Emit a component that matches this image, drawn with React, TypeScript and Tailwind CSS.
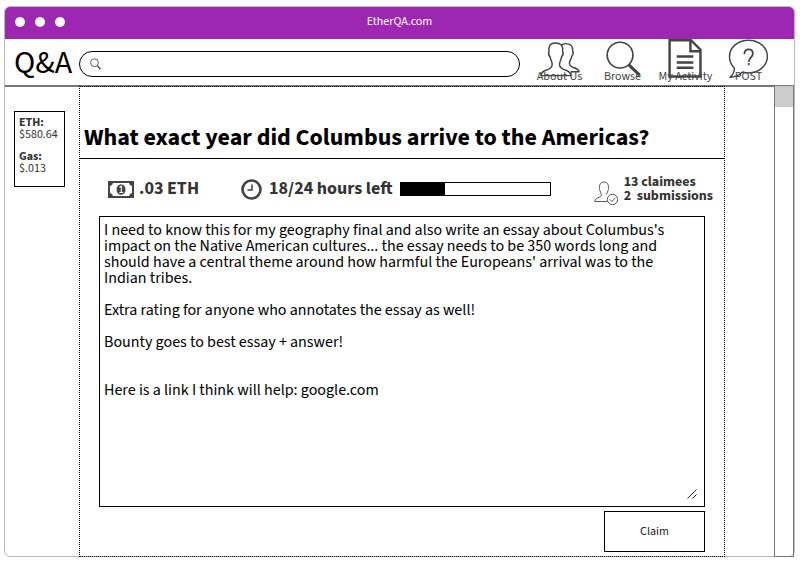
import type { ReactNode } from "react";

const question = `I need to know this for my geography final and also write an essay about Columbus's impact on the Native American cultures... the essay needs to be 350 words long and should have a central theme around how harmful the Europeans' arrival was to the Indian tribes.

Extra rating for anyone who annotates the essay as well!

Bounty goes to best essay + answer!


Here is a link I think will help: google.com`;

const hours = { left: 18, total: 24, shown: 30 };

function PeopleIcon() {
  return (
    <svg width="42" height="42" viewBox="0 0 42 42" fill="none" stroke="#444" strokeWidth="1.5" strokeLinejoin="round">
      <path d="M22 6.500c2-1.500 4.500-2 6-1.500 4.500 0 6.500 3 6 7.500.8 1.500.2 4-1 5.200-.5 3-2 4.500-2.300 6.500-.2 2 .8 3.500 3.300 4.700 4 1.200 6.500 2.500 6.500 4.600H32" />
      <path d="M1.500 37.500c.3-3.200 1.500-4.300 5-5.500 4-1.300 6.500-2.500 6.500-6 0-2.500-1.500-4-2-7.500-1.500-1.500-2-4-1.300-5.500C9 7 11 4 16.500 4s8 3 7.200 9c.8 1.500.3 4-1.200 5.500-.5 3.500-2 5-2 7.500 0 3.500 2.500 4.700 6.500 6 3.500 1.200 5 2.300 5.300 5.500Z" />
    </svg>
  );
}

function BrowseIcon() {
  return (
    <svg width="42" height="42" viewBox="0 0 42 42" fill="none" stroke="#444">
      <circle cx="18" cy="16.500" r="13.200" strokeWidth="1.700" />
      <path d="M27 26.500 38 37" strokeWidth="3.200" />
    </svg>
  );
}

function DocumentIcon() {
  return (
    <svg width="42" height="42" viewBox="0 0 42 42" fill="none" stroke="#444" strokeWidth="2.500">
      <path d="M4.200 1.200H26L35.800 11v27.500H4.200Z" />
      <path d="M25.500 1v11.500H36M11.500 18h17M11.500 24h17M11.500 29.500h17" />
    </svg>
  );
}

function QuestionIcon() {
  return (
    <svg width="42" height="42" viewBox="0 0 42 42" fill="none" stroke="#444" strokeWidth="1.500" strokeLinejoin="round">
      <path d="M20.500 1.200c10.800 0 19.300 7.300 19.300 16.700S31.300 34.700 20.500 34.700c-2 0-4-.3-6-.9C11 37 6.500 39.200 1.500 39.200c3-2.500 4.500-5.500 4.600-9.200C3 27 1 23 1 18 1 8.500 9.700 1.200 20.500 1.200Z" />
      <path d="M16.300 15.500c0-3 1.700-4.800 4.300-4.800s4.300 1.800 4.300 4.300c0 4-4.200 4.200-4.200 8.500M20.700 24.500v2.500" strokeWidth="1.800" />
    </svg>
  );
}

function SearchIcon() {
  return (
    <svg width="11" height="12" viewBox="0 0 11 12" fill="none" stroke="#333" className="shrink-0">
      <circle cx="4.500" cy="4.700" r="3.900" strokeWidth="0.800" />
      <path d="m7.300 7.700 3 3.300" strokeWidth="1.200" />
    </svg>
  );
}

function MoneyIcon() {
  return (
    <svg width="26" height="17" viewBox="0 0 26 17" className="shrink-0">
      <path d="M0 0h26v17H0Z" fill="#444" />
      <path d="M5 2h16q.5 2.500 3 3v7q-2.500.5-3 3H5q-.5-2.500-3-3V5q2.500-.5 3-3Z" fill="#fff" />
      <ellipse cx="13" cy="8.500" rx="4.500" ry="5.300" fill="#444" />
      <path d="m11.500 6.300 1.800-1.100v6M11.300 11.500h3.800" fill="none" stroke="#fff" strokeWidth="1.100" />
    </svg>
  );
}

function ClockIcon() {
  return (
    <svg width="21" height="21" viewBox="0 0 21 21" fill="none" stroke="#444" className="shrink-0">
      <circle cx="10.500" cy="10.500" r="9" strokeWidth="2.600" />
      <path d="M11 5.500v5.500H6.500" strokeWidth="1.600" />
    </svg>
  );
}

function ClaimeeIcon() {
  return (
    <svg width="25" height="25" viewBox="0 0 25 25" fill="none" stroke="#444" strokeWidth="0.900" strokeLinejoin="round" className="mt-2">
      <path d="M13 20.500H.8c0-2.200 1-3 3-3.700 2.200-.7 3.600-1.600 3.600-3 0-1.200-1-2-1.300-4-.8-.8-1-2-.6-3C5.200 3.200 6.800 1 10 1s4.800 2.200 4.400 5.800c.5 1 .2 2.200-.6 3-.2 1.800-1.100 2.600-1.300 3.700" />
      <circle cx="18.500" cy="18.500" r="5.200" />
      <path d="m16 18.500 2 2 3.300-3.700" />
    </svg>
  );
}

function NavLink({ label, children }: { label: string; children: ReactNode }) {
  return (
    <a href="#" className="flex w-[63px] flex-col items-center text-xs leading-4 whitespace-nowrap text-[#444]">
      {children}
      <span className="-mt-[11px]">{label}</span>
    </a>
  );
}

export default function App() {
  return (
    <div className="flex min-h-screen bg-white pt-[6px] pr-[5px] pb-[5px] pl-1 font-['Source_Sans_3','Noto_Sans_CJK_SC',sans-serif] text-black">
      <div className="flex flex-1 flex-col rounded-md border border-[#bbb]">
        <div className="grid h-8 grid-cols-3 items-center rounded-t-[5px] bg-[#9c27b0] px-[10px] pb-[2px]">
          <div className="flex gap-[10px]">
            <span className="size-[10px] rounded-full bg-white" />
            <span className="size-[10px] rounded-full bg-white" />
            <span className="size-[10px] rounded-full bg-white" />
          </div>
          <p className="text-center text-xs leading-4 text-white">EtherQA.com</p>
        </div>

        <header className="flex h-12 items-center border-b-2 border-[#777] pl-[9px]">
          <h1 className="w-[65px] pt-[2px] text-[32px] leading-10">Q&amp;A</h1>
          <label className="mt-1 flex h-[26px] min-w-0 flex-1 items-center gap-2 rounded-full border border-black px-[10px]">
            <SearchIcon />
            <input type="search" aria-label="Search questions" className="min-w-0 flex-1 text-xs outline-none" />
          </label>
          <nav className="flex h-full shrink-0 pr-[14px] pl-2">
            <NavLink label="About Us"><PeopleIcon /></NavLink>
            <NavLink label="Browse"><BrowseIcon /></NavLink>
            <NavLink label="My Activity"><DocumentIcon /></NavLink>
            <NavLink label="POST"><QuestionIcon /></NavLink>
          </nav>
        </header>

        <div className="-my-px flex flex-1">
          <aside className="w-[74px] shrink-0 px-[9px] pt-[25px]">
            <dl className="h-[76px] w-[51px] border border-black px-1 pt-[5px] text-xs leading-3 text-[#333]">
              <dt className="font-bold">ETH:</dt>
              <dd className="mb-[10px]">$580.64</dd>
              <dt className="font-bold">Gas:</dt>
              <dd>$.013</dd>
            </dl>
          </aside>

          <main className="flex min-w-0 flex-1 flex-col border border-dotted border-black">
            <h2 className="border-b border-black px-1 pt-[33px] pb-[2px] text-2xl leading-9 font-bold">
              What exact year did Columbus arrive to the Americas?
            </h2>
            <div className="flex h-[57px] items-center pt-[3px] pr-[11px] pl-7 text-lg leading-6 font-bold text-[#333]">
              <MoneyIcon />
              <span className="ml-[5px]">.03 ETH</span>
              <div className="ml-[42px] flex items-center gap-[7px]">
                <ClockIcon />
                <span>{hours.left}/{hours.total} hours left</span>
                <div role="progressbar" aria-label="Time used" aria-valuenow={hours.shown} className="h-[14px] w-[151px] border border-black">
                  <div className="h-full bg-black" style={{ width: `${hours.shown}%` }} />
                </div>
              </div>
              <div className="ml-auto flex items-center gap-[5px] text-sm leading-[14px]">
                <ClaimeeIcon />
                <p className="whitespace-pre">{"13 claimees\n2  submissions"}</p>
              </div>
            </div>
            <form className="flex flex-1 flex-col items-end gap-1 px-[19px] pb-1" onSubmit={(e) => e.preventDefault()}>
              <div className="relative flex w-full flex-1">
                <textarea
                  aria-label="Question details"
                  defaultValue={question}
                  className="flex-1 resize-none border border-black pt-[5px] pr-4 pb-1 pl-1 text-base leading-4 outline-none"
                />
                <svg width="10" height="10" viewBox="0 0 10 10" stroke="#222" className="absolute right-2 bottom-2">
                  <path d="M.5 9.500 9.500.5M5.500 9.500l4-4" />
                </svg>
              </div>
              <button type="submit" className="h-[41px] w-[101px] border border-black pt-px text-xs text-[#222]">Claim</button>
            </form>
          </main>

          <div className="ml-[49px] w-5 shrink-0 border border-t-0 border-[#777]">
            <div className="h-[21px] bg-[#ccc]" />
          </div>
        </div>
      </div>
    </div>
  );
}
